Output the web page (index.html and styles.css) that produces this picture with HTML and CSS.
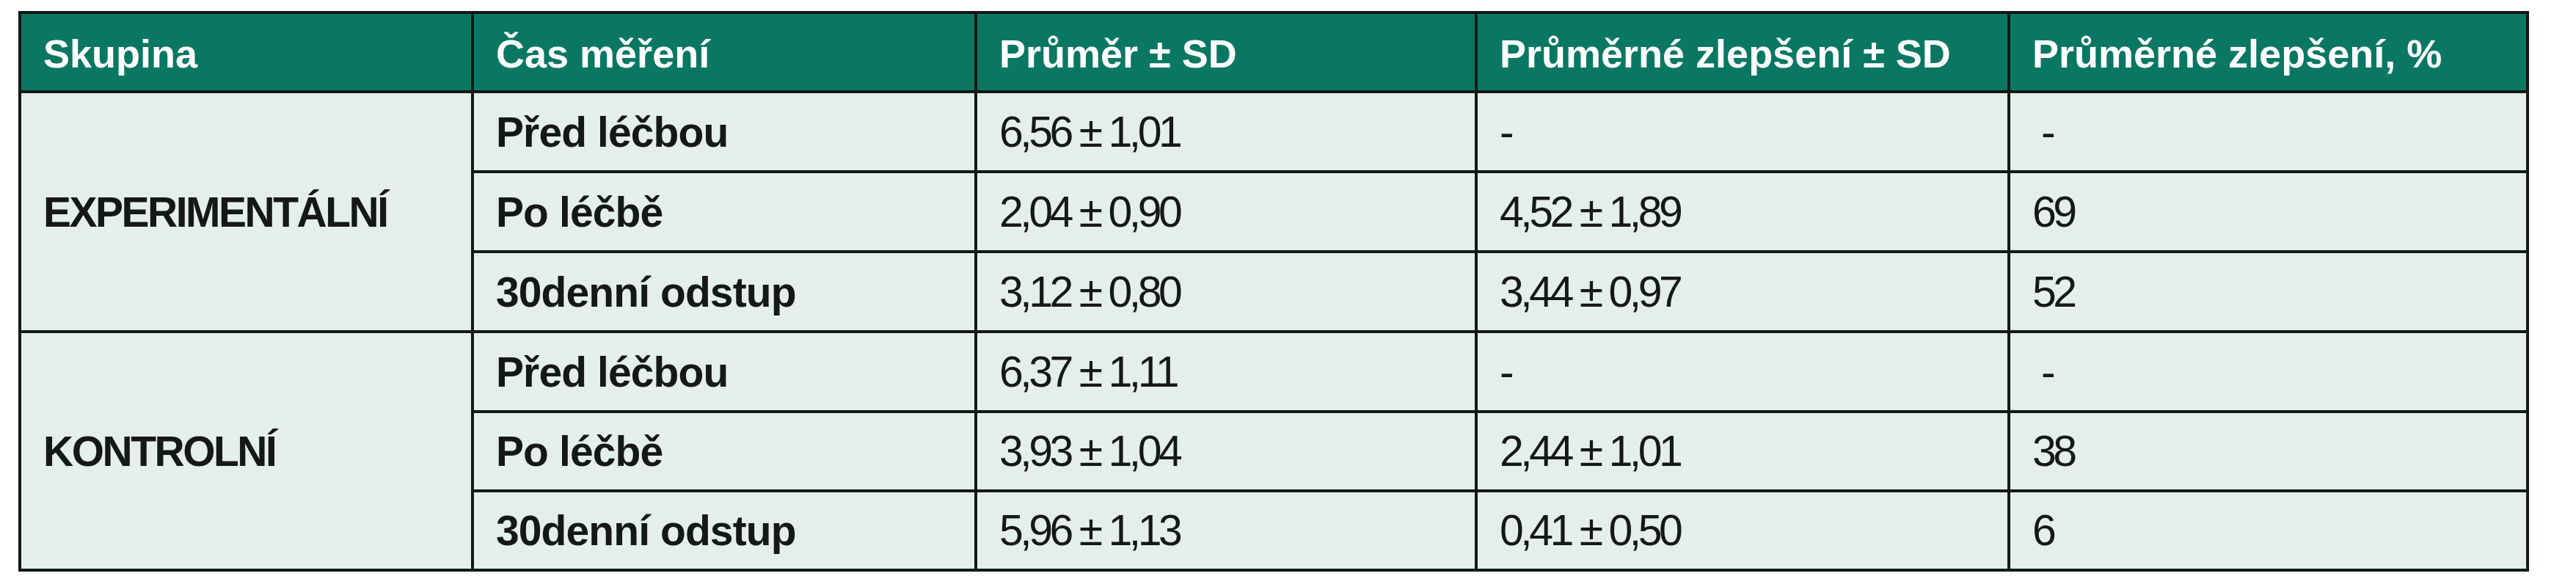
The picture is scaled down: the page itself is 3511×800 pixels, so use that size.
FILE: index.html
```html
<!DOCTYPE html>
<html lang="cs">
<head>
<meta charset="utf-8">
<title>Tabulka</title>
<link rel="stylesheet" href="styles.css">
</head>
<body>
<div class="page">
  <div class="grid" role="table">
    <div class="cell head" role="columnheader">Skupina</div>
    <div class="cell head" role="columnheader">Čas měření</div>
    <div class="cell head" role="columnheader">Průměr ± SD</div>
    <div class="cell head" role="columnheader">Průměrné zlepšení ± SD</div>
    <div class="cell head" role="columnheader">Průměrné zlepšení, %</div>

    <div class="cell group" role="rowheader">EXPERIMENTÁLNÍ</div>
    <div class="cell time">Před léčbou</div>
    <div class="cell num">6,56 ± 1,01</div>
    <div class="cell num">-</div>
    <div class="cell num">&nbsp;-</div>

    <div class="cell time">Po léčbě</div>
    <div class="cell num">2,04 ± 0,90</div>
    <div class="cell num">4,52 ± 1,89</div>
    <div class="cell num">69</div>

    <div class="cell time">30denní odstup</div>
    <div class="cell num">3,12 ± 0,80</div>
    <div class="cell num">3,44 ± 0,97</div>
    <div class="cell num">52</div>

    <div class="cell group" role="rowheader">KONTROLNÍ</div>
    <div class="cell time">Před léčbou</div>
    <div class="cell num">6,37 ± 1,11</div>
    <div class="cell num">-</div>
    <div class="cell num">&nbsp;-</div>

    <div class="cell time">Po léčbě</div>
    <div class="cell num">3,93 ± 1,04</div>
    <div class="cell num">2,44 ± 1,01</div>
    <div class="cell num">38</div>

    <div class="cell time">30denní odstup</div>
    <div class="cell num">5,96 ± 1,13</div>
    <div class="cell num">0,41 ± 0,50</div>
    <div class="cell num">6</div>
  </div>
</div>
</body>
</html>
```

FILE: styles.css
```css
html, body {
  margin: 0;
  padding: 0;
  background: #ffffff;
}

.page {
  padding: 15px 0 0 25px;
}

.grid {
  display: grid;
  width: max-content;
  grid-template-columns: 613px 682px 678px 722px 703px;
  grid-template-rows: 104px 105px 105px 105px 105px 104px 104px;
  gap: 4px;
  padding: 4px;
  background: #121814;
}

.cell {
  display: flex;
  align-items: center;
  padding: 0 30px;
  background: #e5efea;
  color: #151815;
  font-family: "Liberation Sans", Arial, sans-serif;
  font-size: 57px;
  white-space: pre;
}

.head {
  background: #0a7763;
  color: #ffffff;
  font-weight: bold;
  font-size: 54px;
  padding-top: 4px;
}

.group {
  grid-row: span 3;
  font-weight: bold;
  letter-spacing: -2.5px;
}

.time {
  font-weight: bold;
  letter-spacing: -0.9px;
}

.num {
  font-weight: normal;
  font-size: 59px;
  letter-spacing: -4.5px;
}
```
